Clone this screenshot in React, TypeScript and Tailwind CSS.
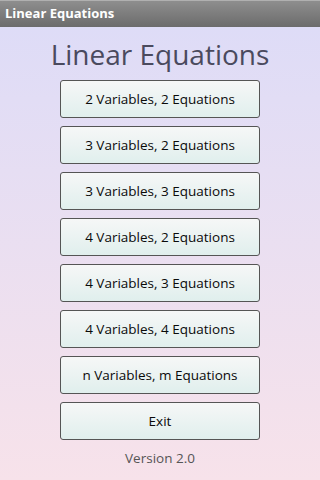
const items = [
  "2 Variables, 2 Equations",
  "3 Variables, 2 Equations",
  "3 Variables, 3 Equations",
  "4 Variables, 2 Equations",
  "4 Variables, 3 Equations",
  "4 Variables, 4 Equations",
  "n Variables, m Equations",
  "Exit",
];

export default function App() {
  return (
    <div className="flex h-[480px] w-[320px] flex-col overflow-hidden font-['Open_Sans','DejaVu_Sans',sans-serif]">
      <div className="flex h-[27px] items-center border-t border-[#b0b0b0] bg-gradient-to-b from-[#8e8e8e] to-[#6c6c6c] px-[5px] text-[13px] font-bold text-white">
        Linear Equations
      </div>
      <div className="flex flex-1 flex-col items-center bg-gradient-to-b from-[#dedcf7] to-[#f7e2ea]">
        <h1 className="mt-[6px] text-[28px] leading-[42px] text-[#4a4a5e]">Linear Equations</h1>
        <div className="mt-[5px] flex flex-col gap-[8px]">
          {items.map((label) => (
            <button
              key={label}
              className="h-[38px] w-[200px] rounded-[3px] border border-[#555] bg-gradient-to-b from-[#f6f7f7] to-[#e0efed] text-[13.5px] text-[#0a0a0a]"
            >
              {label}
            </button>
          ))}
        </div>
        <div className="mt-[8px] text-[13.5px] text-[#555]">Version 2.0</div>
      </div>
    </div>
  );
}
